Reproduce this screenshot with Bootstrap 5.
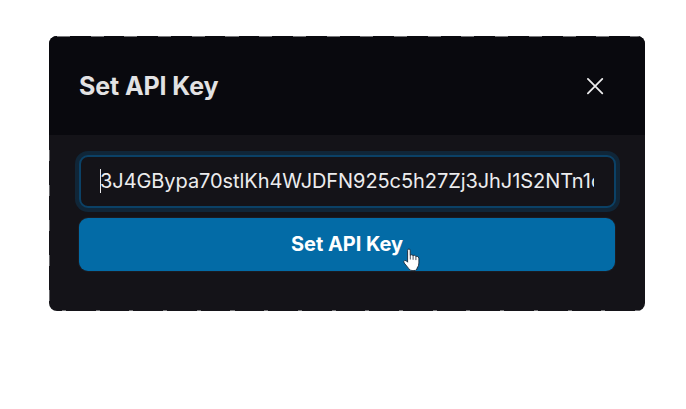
<!DOCTYPE html>
<html lang="en">
<head>
<meta charset="utf-8">
<meta name="viewport" content="width=device-width, initial-scale=1">
<title>Set API Key</title>
<link href="https://cdn.jsdelivr.net/npm/bootstrap@5.3.0/dist/css/bootstrap.min.css" rel="stylesheet">
<style>
body{background:#fff;font-family:Inter,"Liberation Sans",sans-serif;overflow:hidden}
.key-dialog{width:596px;height:275px;margin:36px 0 0 49px;background:#141318;border-radius:8px;overflow:hidden}
.key-dialog::before{content:"";position:absolute;left:8px;right:6px;top:0;height:1px;background:repeating-linear-gradient(90deg,#77777a 0 13px,transparent 13px 33.7px)}
.key-dialog::after{content:"";position:absolute;left:13px;right:6px;bottom:0;height:1px;background:repeating-linear-gradient(90deg,#77777a 0 4px,transparent 4px 33.7px)}
.edge-marks{left:0;top:114px;width:1px;height:153px;background:repeating-linear-gradient(180deg,#68686c 0 11px,transparent 11px 35px)}
.key-header{height:99px;padding:0 38px 0 30px;background:#09090e}
.key-title{font-size:25px;line-height:32px;font-weight:700;letter-spacing:-.1px;color:#e2e2e3}
.key-close{width:24px;height:24px;color:#ececed}
.key-body{padding:20px 30px 0}
.key-input,.key-input:focus{width:537px;height:53px;padding:0 20px 1px 19px;border:2px solid #0b4166;border-radius:9px;background:#141318;color:#ececee;font-size:20px;letter-spacing:-.07px;box-shadow:0 0 0 4px #102638}
.key-submit,.key-submit:hover{height:53px;margin-top:10px;padding:0 0 1px;border:0;border-radius:9px;background:#036ba6;color:#fff;font-size:20px;font-weight:700;line-height:1;letter-spacing:-.05px;box-shadow:0 0 0 1px #25292f66}
.caret{left:51px;top:133px;width:1px;height:24px;background:#e8e8ea}
.pointer{left:354px;top:212px}
</style>
<script src="https://cdn.jsdelivr.net/npm/bootstrap@5.3.0/dist/js/bootstrap.bundle.min.js"></script>
</head>
<body>
<main class="key-dialog position-relative">
  <header class="key-header d-flex align-items-center justify-content-between">
    <h1 class="key-title m-0">Set API Key</h1>
    <button class="key-close btn p-0 border-0 d-flex" type="button" aria-label="Close">
      <svg width="24" height="24" viewBox="0 0 24 24" fill="none" stroke="currentColor" stroke-width="1.8" stroke-linecap="round"><path d="M4.9 4.9l14.4 14.4M19.3 4.9L4.9 19.3"/></svg>
    </button>
  </header>
  <form class="key-body d-flex flex-column">
    <input class="key-input form-control" type="text" aria-label="API key" value="3J4GBypa70stlKh4WJDFN925c5h27Zj3JhJ1S2NTn1c8">
    <button class="key-submit btn w-100" type="button">Set API Key</button>
  </form>
  <span class="caret position-absolute"></span>
  <span class="edge-marks position-absolute"></span>
  <svg class="pointer position-absolute" width="17" height="24" viewBox="0 0 17 24" aria-hidden="true"><path d="M4.6 14.2V2.6Q4.6 1 5.9 1T7.2 2.6V7.2Q8.8 6.2 10 7.5 11.7 6.8 12.7 8.3 15.2 7.9 15.9 10V15Q15.9 18 14 20.2V21.2Q13 22.7 10 22.7 6.5 22.7 5.6 20.4L1.2 15Q.2 13.2 1.7 12.5 3.2 12 4.6 14.2Z" fill="#fff" stroke="#1c2836" stroke-width=".9" stroke-linejoin="round"/><path d="M7.3 7v4.5M10.1 7.8v4M12.9 8.7v3.4" stroke="#34404d" stroke-width=".9"/></svg>
</main>
</body>
</html>
